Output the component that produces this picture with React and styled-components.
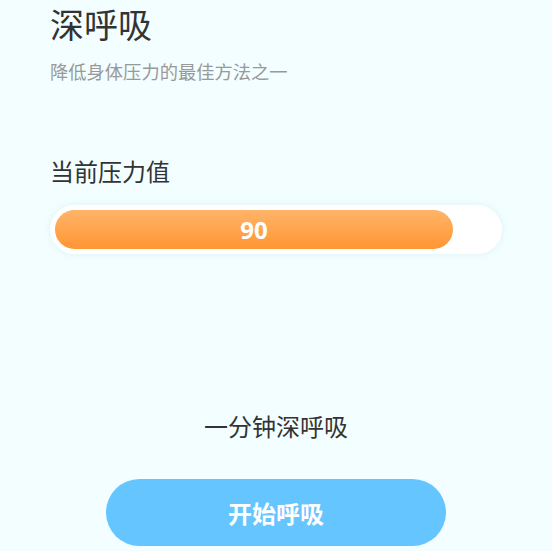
import React from "react";
import styled, { createGlobalStyle } from "styled-components";

const Global = createGlobalStyle`
  html, body { margin: 0; padding: 0; background: #f2feff; }
  body { font-family: "Noto Sans CJK SC", "Noto Sans", sans-serif; }
`;

const Page = styled.div`
  width: 552px;
  height: 551px;
  box-sizing: border-box;
  padding: 1px 50px 0;
  background: #f2feff;
  display: flex;
  flex-direction: column;
  overflow: hidden;
`;

const Title = styled.h1`
  margin: 0;
  font-size: 34px;
  font-weight: 400;
  line-height: 46px;
  color: #333;
`;

const Subtitle = styled.p`
  margin: 11px 0 0;
  font-size: 18.3px;
  line-height: 26px;
  color: #999;
`;

const Label = styled.div`
  margin-top: 70px;
  font-size: 24px;
  line-height: 34px;
  color: #333;
`;

const Track = styled.div`
  margin-top: 17px;
  height: 49px;
  box-sizing: border-box;
  padding: 5px 5px;
  border-radius: 25px;
  background: #fff;
  box-shadow: 0 0 6px rgba(180, 220, 230, 0.35);
`;

const Fill = styled.div`
  height: 39px;
  border-radius: 20px;
  background: linear-gradient(180deg, #ffb469 0%, #ff9633 100%);
  display: flex;
  align-items: center;
  justify-content: center;
  color: #fff;
  font-size: 24px;
  font-weight: 700;
  font-family: "Noto Sans", "Noto Sans CJK SC", sans-serif;
`;

const Caption = styled.div`
  margin-top: 155px;
  text-align: center;
  font-size: 24px;
  line-height: 34px;
  color: #333;
`;

const Button = styled.button`
  align-self: center;
  margin-top: 36px;
  width: 340px;
  height: 67px;
  border: none;
  border-radius: 34px;
  background: #64c5ff;
  color: #fff;
  font-family: "Noto Sans CJK SC", sans-serif;
  font-size: 24px;
  font-weight: 700;
  cursor: pointer;
`;

export default function App() {
  const value = 90;
  return (
    <>
      <Global />
      <Page>
        <Title>深呼吸</Title>
        <Subtitle>降低身体压力的最佳方法之一</Subtitle>
        <Label>当前压力值</Label>
        <Track>
          <Fill style={{ width: `${value}%` }}>{value}</Fill>
        </Track>
        <Caption>一分钟深呼吸</Caption>
        <Button>开始呼吸</Button>
      </Page>
    </>
  );
}
